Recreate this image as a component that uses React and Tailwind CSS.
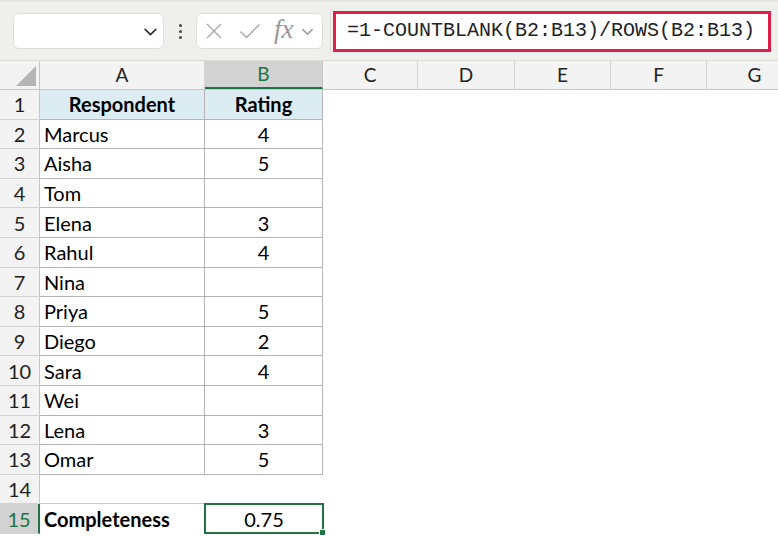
import React from "react";

const rows = [
    ["Marcus", "4"],
    ["Aisha", "5"],
    ["Tom", ""],
    ["Elena", "3"],
    ["Rahul", "4"],
    ["Nina", ""],
    ["Priya", "5"],
    ["Diego", "2"],
    ["Sara", "4"],
    ["Wei", ""],
    ["Lena", "3"],
    ["Omar", "5"],
];

const otherCols = [
    { name: "C", w: "w-[95px]" },
    { name: "D", w: "w-[97px]" },
    { name: "E", w: "w-[96px]" },
    { name: "F", w: "w-[96px]" },
    { name: "G", w: "w-[96px]" },
];

function Chevron({ className }) {
    return (
        <svg className={className} viewBox="0 0 16 16" fill="none">
            <path d="M3 6l5 5 5-5" stroke="currentColor" strokeWidth="1.6" strokeLinecap="round" strokeLinejoin="round" />
        </svg>
    );
}

function RowHead({ n, selected }) {
    return (
        <div className={`w-[40px] shrink-0 flex items-center justify-center border-b border-[#d4d4d4] ${selected ? "bg-[#d2d2d2] text-[#217346] border-r-2 border-r-[#217346]" : "bg-[#f3f3f3] text-[#222] border-r border-r-[#c6c6c6]"}`}>
            {n}
        </div>
    );
}

export default function App() {
    return (
        <div className="w-[778px] h-[536px] overflow-hidden bg-white" style={{ fontFamily: "Lato, 'Open Sans', sans-serif" }}>
            {/* formula bar */}
            <div className="h-[61px] bg-[#eff0eb] flex items-center border-b border-[#dcdcd6] border-t-2 border-t-[#e4e4de]">
                <div className="ml-[13px] w-[151px] h-[36px] bg-white rounded-md border border-[#dedede] flex items-center justify-end pr-[4px]">
                    <Chevron className="w-[17px] h-[17px] text-[#333]" />
                </div>
                <div className="w-[32px] flex flex-col items-center gap-[3px]">
                    <span className="w-[3px] h-[3px] bg-[#444] rounded-full"></span>
                    <span className="w-[3px] h-[3px] bg-[#444] rounded-full"></span>
                    <span className="w-[3px] h-[3px] bg-[#444] rounded-full"></span>
                </div>
                <div className="w-[127px] h-[36px] bg-white rounded-md border border-[#dedede] flex items-center pl-[8px] text-[#a8a8a8]">
                    <svg className="w-[18px] h-[18px]" viewBox="0 0 18 18" fill="none">
                        <path d="M2 2l14 14M16 2L2 16" stroke="currentColor" strokeWidth="1.4" />
                    </svg>
                    <svg className="w-[22px] h-[18px] ml-[16px]" viewBox="0 0 22 18" fill="none">
                        <path d="M1.5 9.5l6 6L20.5 2.5" stroke="currentColor" strokeWidth="1.4" />
                    </svg>
                    <span className="ml-[13px] text-[27px] italic text-[#999] leading-none -mt-[3px]" style={{ fontFamily: "'Liberation Serif', serif" }}>fx</span>
                    <Chevron className="w-[15px] h-[15px] ml-[6px] text-[#999]" />
                </div>
                <div className="ml-[7px] w-[1px] h-[44px] bg-[#dcdcd6]"></div>
                <div className="ml-[2px] w-[438px] h-[41px] bg-white border-[3px] border-[#dc1f4b] flex items-center pl-[11px] text-[20px] text-[#222]" style={{ fontFamily: "'Liberation Mono', monospace" }}>
                    =1-COUNTBLANK(B2:B13)/ROWS(B2:B13)
                </div>
            </div>

            {/* column headers */}
            <div className="flex h-[29px] text-[19px] bg-[#f3f3f3] border-b border-[#c6c6c6]">
                <div className="w-[40px] shrink-0 border-r border-[#c6c6c6] flex items-end justify-end p-[3px]">
                    <div className="w-0 h-0 border-l-[20px] border-l-transparent border-b-[20px] border-b-[#b4b4b4]"></div>
                </div>
                <div className="w-[165px] shrink-0 border-r border-[#d4d4d4] flex items-center justify-center text-[#222]">A</div>
                <div className="w-[118px] shrink-0 border-r border-[#c6c6c6] flex items-center justify-center bg-[#d2d2d2] text-[#217346] border-b-2 border-b-[#217346]">B</div>
                {otherCols.map((c) => (
                    <div key={c.name} className={`${c.w} shrink-0 border-r border-[#d4d4d4] flex items-center justify-center text-[#222]`}>{c.name}</div>
                ))}
            </div>

            {/* rows */}
            <div className="text-[20px] text-black">
                <div className="flex h-[29.6px]">
                    <RowHead n={1} />
                    <div className="w-[165px] shrink-0 bg-[#dbedf3] border-r border-b border-[#b4b4b4] flex items-center justify-center font-bold">Respondent</div>
                    <div className="w-[118px] shrink-0 bg-[#dbedf3] border-r border-b border-[#b4b4b4] flex items-center justify-center font-bold">Rating</div>
                </div>
                {rows.map((r, i) => (
                    <div key={r[0]} className="flex h-[29.6px]">
                        <RowHead n={i + 2} />
                        <div className="w-[165px] shrink-0 border-r border-b border-[#b4b4b4] flex items-center pl-[4px]">{r[0]}</div>
                        <div className="w-[118px] shrink-0 border-r border-b border-[#b4b4b4] flex items-center justify-center">{r[1]}</div>
                    </div>
                ))}
                <div className="flex h-[29.6px]">
                    <RowHead n={14} />
                    <div className="w-[165px] shrink-0 border-b border-[#c8c8c8]"></div>
                </div>
                <div className="flex h-[29.6px]">
                    <RowHead n={15} selected />
                    <div className="w-[164px] shrink-0 flex items-center pl-[4px] font-bold">Completeness</div>
                    <div className="relative w-[120px] shrink-0 border-2 border-[#217346] flex items-center justify-center -mt-[1px]">
                        0.75
                        <div className="absolute -right-[4px] -bottom-[4px] w-[7px] h-[7px] bg-[#217346] border border-white"></div>
                    </div>
                </div>
            </div>
        </div>
    );
}
